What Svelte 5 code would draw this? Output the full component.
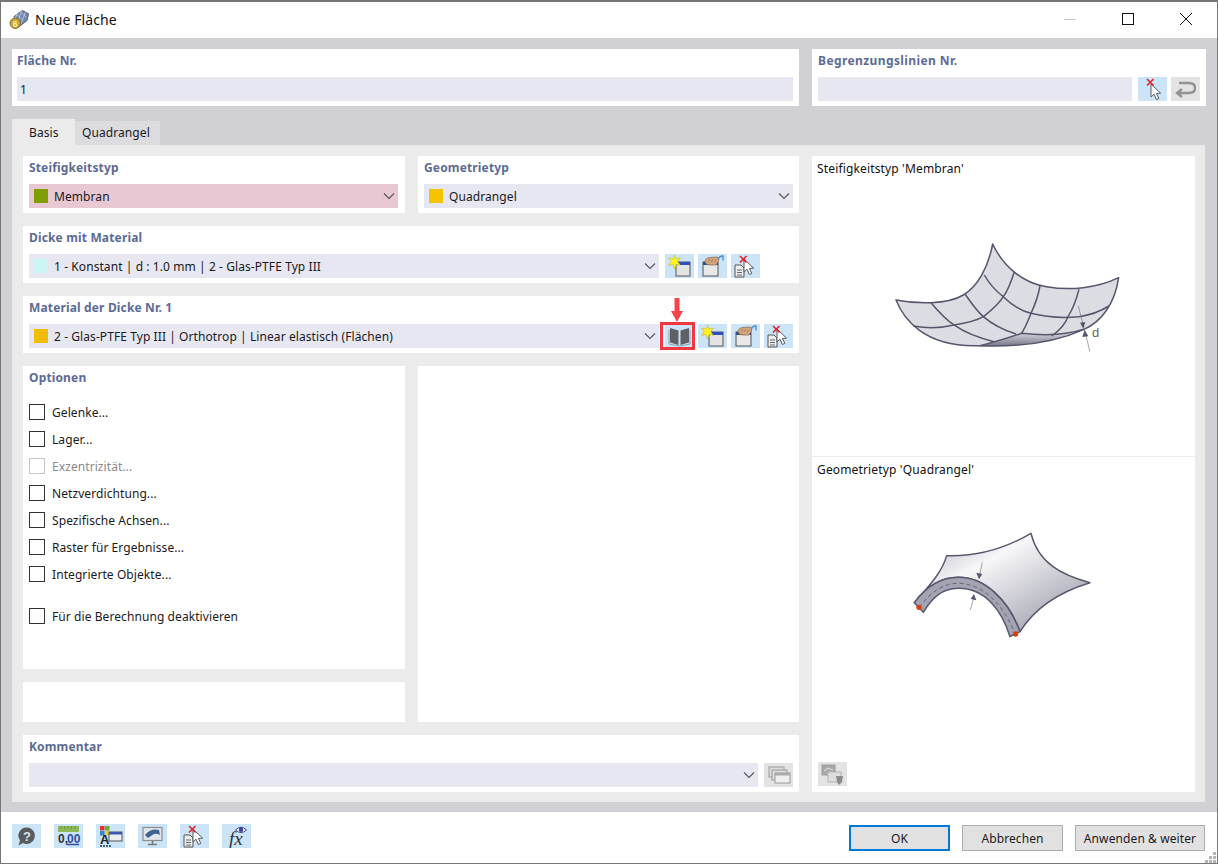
<script>
  const options = ['Gelenke...', 'Lager...', 'Exzentrizität...', 'Netzverdichtung...', 'Spezifische Achsen...', 'Raster für Ergebnisse...', 'Integrierte Objekte...'];
</script>

{#snippet chevron()}
  <svg class="chev" width="12" height="8" viewBox="0 0 12 8"><path d="M1 1.500 6 6.500 11 1.500" fill="none" stroke="#55555f" stroke-width="1.100"/></svg>
{/snippet}

{#snippet cursor(x, y)}
  <path transform="translate({x} {y})" d="M0 0 0 13 3 10.200 5.400 15.500 7.800 14.400 5.400 9.400 9.600 9.200Z" fill="#fff" stroke="#5a5a5a" stroke-width="1"/>
{/snippet}

{#snippet redx(x, y)}
  <path transform="translate({x} {y})" d="M0 0 6.500 6.500M6.500 0 0 6.500" stroke="#e8202a" stroke-width="1.600" fill="none"/>
{/snippet}

{#snippet pick()}
  <svg class="tile" viewBox="0 0 29 24">{@render cursor(13, 7)}{@render redx(9, 2)}</svg>
{/snippet}

{#snippet back()}
  <svg class="tile off" viewBox="0 0 29 24"><path d="M8 6H18Q24 6 24 11T18 16H7" fill="none" stroke="#929292" stroke-width="2.400"/><path d="M11 12 6 16 11 20" fill="none" stroke="#929292" stroke-width="2.400"/></svg>
{/snippet}

{#snippet fresh()}
  <svg class="tile" viewBox="0 0 29 24">
    <rect x="11" y="8" width="14" height="14" fill="#e3e3e3" stroke="#555"/>
    <rect x="11" y="8" width="14" height="3" fill="#2d4fc0"/>
    <path d="M9.500 1 11 5 15.500 4 12.700 7.600 15.500 11.500 11.300 10.400 9.500 15 7.700 10.400 3.500 11.500 6.300 7.600 3.500 4 8 5Z" fill="#fff21f" stroke="#b9ae30" stroke-width=".5"/>
  </svg>
{/snippet}

{#snippet hand()}
  <svg class="tile" viewBox="0 0 29 24">
    <rect x="5" y="8" width="15" height="14" fill="#e8e8e8" stroke="#555"/>
    <rect x="5" y="8" width="15" height="3" fill="#35507f"/>
    <path d="M7 8Q7 4 12 3.500L19 3Q22 4 20.500 7L18 11 12 11Q8 11 7 8Z" fill="#d6a57c" stroke="#80644a" stroke-width=".7"/>
    <path d="M10 7.500 12 5M13 8 15 5M16 8.500 18 5.500" stroke="#80644a" stroke-width=".6" fill="none"/>
    <path d="M20 5Q22 1.500 25 2L25 6.500" fill="none" stroke="#4d8fd0" stroke-width="1.400"/>
  </svg>
{/snippet}

{#snippet sheet()}
  <svg class="tile" viewBox="0 0 29 24">
    <path d="M4 11H10L13 14V23H4Z" fill="#eee" stroke="#555"/>
    <path d="M6 16H11M6 18.500H11M6 21H11" stroke="#555" stroke-width=".9"/>
    {@render cursor(13, 5)}{@render redx(9, 2)}
  </svg>
{/snippet}

{#snippet book()}
  <svg class="tile" viewBox="0 0 29 24">
    <path d="M5 4 13.500 6.500V21L5 18.500Z" fill="#5f6065"/>
    <path d="M24 4 15.500 6.500V21L24 18.500Z" fill="#5f6065"/>
    <path d="M4 6V20L14.500 22 25 20V6" fill="none" stroke="#8da0b3" stroke-width="1"/>
  </svg>
{/snippet}

{#snippet stack()}
  <svg class="tile off" viewBox="0 0 29 24">
    <rect x="5" y="4" width="15" height="10" fill="#ddd" stroke="#9a9a9a"/>
    <rect x="8" y="7" width="15" height="10" fill="#ddd" stroke="#9a9a9a"/>
    <rect x="11" y="10" width="15" height="10" fill="#f0f0f0" stroke="#9a9a9a"/>
    <rect x="11" y="10" width="15" height="2.500" fill="#ababab"/>
  </svg>
{/snippet}

{#snippet images()}
  <svg class="tile off" viewBox="0 0 29 24">
    <rect x="4" y="3" width="13" height="10" fill="#a8a8a8" stroke="#9c9c9c"/>
    <path d="M6 9 10 6 15 8" stroke="#e2e2e2" fill="none"/>
    <rect x="10" y="10" width="13" height="10" fill="#dedede" stroke="#b4b4b4"/>
    <path d="M18 14 25 14 24 20 21 23 19 20Z" fill="#8b8b8b"/>
  </svg>
{/snippet}

{#snippet help()}
  <svg class="tile" viewBox="0 0 29 24">
    <path d="M15 3.500A8.200 8.200 0 1 1 11 19L6.500 21.500 8 16.500A8.200 8.200 0 0 1 15 3.500Z" fill="#5b5b5f"/>
    <text x="15" y="16.500" class="helpq">?</text>
  </svg>
{/snippet}

{#snippet digits()}
  <svg class="tile" viewBox="0 0 29 24">
    <rect x="4" y="2" width="21" height="6" fill="#8eb85a"/>
    <path d="M7 2V5M10.500 2V5M14 2V5M17.500 2V5M21 2V5" stroke="#5d8a34" stroke-width=".7"/>
    <text x="4" y="18.500" class="num">0,</text><text x="13" y="18.500" class="num blue">00</text>
    <path d="M13 20.500H25" stroke="#2d4fa8" stroke-width="1.500"/>
  </svg>
{/snippet}

{#snippet colors()}
  <svg class="tile" viewBox="0 0 29 24">
    <rect x="4" y="2" width="4.500" height="4.500" fill="#d33"/><rect x="9" y="2" width="4.500" height="4.500" fill="#6a3"/>
    <rect x="4" y="7" width="4.500" height="4.500" fill="#38c"/><rect x="9" y="7" width="4.500" height="4.500" fill="#ec3"/>
    <text x="4" y="20" class="capa">A</text>
    <rect x="13" y="8" width="13" height="9" fill="#eee" stroke="#555"/><rect x="13" y="8" width="13" height="2.500" fill="#3a58ad"/>
    <path d="M4 22H15" stroke="#333" stroke-width="1.500" stroke-dasharray="2 1"/>
  </svg>
{/snippet}

{#snippet monitor()}
  <svg class="tile" viewBox="0 0 29 24">
    <rect x="5" y="3.500" width="19" height="13" fill="#dfe6ee" stroke="#8c8c8c" stroke-width="1.200"/>
    <path d="M7 11Q13 4 21 6L22 11Q17 8 13 12L10 14Z" fill="#3f6490"/>
    <path d="M14.500 16.500V20M10 20.500H19" stroke="#777" stroke-width="1.600"/>
  </svg>
{/snippet}

{#snippet fx()}
  <svg class="tile" viewBox="0 0 29 24">
    <text x="7" y="20.500" class="fx">fx</text>
    <path d="M13.500 6Q19 0.500 24.500 6 19 11 13.500 6Z" fill="#fff" stroke="#39408f" stroke-width="1"/>
    <circle cx="19" cy="5.700" r="2.200" fill="#39408f"/>
  </svg>
{/snippet}

<div class="window">
  <header class="titlebar">
    <svg class="appicon" viewBox="0 0 22 22">
      <path d="M5 8 14 1.500 20.500 5 19 12 10 19Z" fill="#6f86ad" stroke="#4b4b55" stroke-width=".8"/>
      <path d="M8 5.500 15 12M12 3 18.500 9M5.500 9 13 15.500M9 3 6 12M13 2 9 15M17 3.500 13 15" stroke="#c3cfe2" stroke-width=".8" fill="none"/>
      <circle cx="6.500" cy="15" r="5.500" fill="#c9a53a" stroke="#6e5a1f" stroke-width=".8"/>
      <text x="6.500" y="18.500" class="six">6</text>
    </svg>
    <span class="title">Neue Fläche</span>
    <div class="winctl">
      <span class="min"></span>
      <span class="max"></span>
      <svg class="close" width="12" height="12" viewBox="0 0 12 12"><path d="M0 0 12 12M12 0 0 12" stroke="#111" stroke-width="1"/></svg>
    </div>
  </header>

  <main class="body">
    <div class="toprow">
      <section class="panel">
        <h3>Fläche Nr.</h3>
        <div class="row"><div class="field plain">1</div></div>
      </section>
      <section class="panel lines">
        <h3>Begrenzungslinien Nr.</h3>
        <div class="row">
          <div class="field"></div>
          <div class="tools">{@render pick()}{@render back()}</div>
        </div>
      </section>
    </div>

    <nav class="tabs">
      <span class="tab active">Basis</span>
      <span class="tab">Quadrangel</span>
    </nav>

    <div class="tabbody">
      <div class="leftcol">
        <div class="pair">
          <section class="panel narrow">
            <h3>Steifigkeitstyp</h3>
            <div class="row"><div class="field select pink"><i class="swatch green"></i><span>Membran</span>{@render chevron()}</div></div>
          </section>
          <section class="panel">
            <h3>Geometrietyp</h3>
            <div class="row"><div class="field select"><i class="swatch yellow"></i><span>Quadrangel</span>{@render chevron()}</div></div>
          </section>
        </div>

        <section class="panel">
          <h3>Dicke mit Material</h3>
          <div class="row">
            <div class="field select fixed"><i class="swatch cyan"></i><span>1 - Konstant | d : 1.0 mm | 2 - Glas-PTFE Typ III</span>{@render chevron()}</div>
            <div class="tools">{@render fresh()}{@render hand()}{@render sheet()}</div>
          </div>
        </section>

        <section class="panel">
          <h3>Material der Dicke Nr. 1</h3>
          <div class="row">
            <div class="field select fixed"><i class="swatch amber"></i><span>2 - Glas-PTFE Typ III | Orthotrop | Linear elastisch (Flächen)</span>{@render chevron()}</div>
            <div class="tools">
              <div class="marked">
                {@render book()}
                <span class="frame"></span>
                <svg class="arrow" width="12" height="24" viewBox="0 0 12 24"><path d="M3.500 0H8.500V13H12L6 24 0 13H3.500Z" fill="#f9424a"/></svg>
              </div>
              {@render fresh()}{@render hand()}{@render sheet()}
            </div>
          </div>
        </section>

        <div class="pair grow">
          <div class="stack">
            <section class="panel options">
              <h3>Optionen</h3>
              <ul class="checks">
                {#each options as o}
                  <li class:disabled={o.startsWith('Exz')}><i class="box"></i><span>{o}</span></li>
                {/each}
                <li class="apart"><i class="box"></i><span>Für die Berechnung deaktivieren</span></li>
              </ul>
            </section>
            <section class="panel blank"></section>
          </div>
          <section class="panel"></section>
        </div>

        <section class="panel">
          <h3>Kommentar</h3>
          <div class="row">
            <div class="field select"><span></span>{@render chevron()}</div>
            <div class="tools">{@render stack()}</div>
          </div>
        </section>
      </div>

      <aside class="preview">
        <div class="pv first">
          <p>Steifigkeitstyp 'Membran'</p>
          <svg class="art" width="383" height="276" viewBox="812 180 383 276">
            <defs>
              <linearGradient id="fold" x1="0" y1="0" x2="0" y2="1"><stop offset="0" stop-color="#eeeef2"/><stop offset="1" stop-color="#77778c"/></linearGradient>
            </defs>
            <g transform="translate(880 230) scale(.3333)" fill="none" stroke="#55566c" stroke-width="4.500" stroke-linejoin="round">
              <path d="M48 210C110 222 200 225 250 195 295 168 325 110 338 42 370 110 430 160 500 170 570 182 650 175 716 143 705 220 665 275 612 298 520 340 400 352 290 347 130 350 70 265 48 210Z" fill="#dcdde3" stroke="none"/>
              <path d="M300 347C350 335 395 320 425 310 480 316 550 318 612 298 520 340 400 352 300 347Z" fill="url(#fold)" stroke="none"/>
              <path d="M153 218C180 250 200 270 222 285 260 312 300 325 342 335"/>
              <path d="M255 192C275 220 290 243 310 260 345 290 375 302 408 312"/>
              <path d="M313 135C330 165 350 185 370 200 395 225 420 242 453 250 500 262 550 265 597 260 630 255 660 245 687 228"/>
              <path d="M100 288C145 296 185 294 222 285 255 280 285 275 310 260 335 240 355 225 370 200 385 180 395 150 403 125"/>
              <path d="M425 310C440 285 445 270 453 250 465 225 475 195 480 168"/>
              <path d="M515 318C540 300 555 285 564 260 580 235 590 205 597 178"/>
              <path d="M300 347C350 335 395 320 425 310 480 316 550 318 612 298"/>
              <path d="M48 210C110 222 200 225 250 195 295 168 325 110 338 42 370 110 430 160 500 170 570 182 650 175 716 143 705 220 665 275 612 298 520 340 400 352 290 347 130 350 70 265 48 210Z"/>
              <path d="M595 228 630 365" stroke="#777" stroke-width="2"/>
              <path d="M600 278 616 276 610 296Z" fill="#55566c" stroke="none"/>
              <path d="M614 300 625 319 607 321Z" fill="#55566c" stroke="none"/>
            </g>
            <text x="1092" y="337" class="dlabel">d</text>
          </svg>
        </div>
        <div class="pv">
          <p>Geometrietyp 'Quadrangel'</p>
          <svg class="art" width="383" height="270" viewBox="812 481 383 270">
            <defs>
              <linearGradient id="sheen" x1="0" y1="0" x2="1" y2="1"><stop offset="0" stop-color="#a9a9b8"/><stop offset=".35" stop-color="#f7f7f9"/><stop offset="1" stop-color="#8f8f9f"/></linearGradient>
            </defs>
            <g transform="translate(905 530) scale(.3333)" fill="none" stroke="#58586e" stroke-width="4.500" stroke-linejoin="round">
              <path d="M28 218C70 170 110 130 125 77 220 80 310 50 378 10 400 100 470 135 555 158 450 190 385 240 345 305 310 210 240 142 160 142 100 142 60 175 28 218Z" fill="url(#sheen)"/>
              <path d="M28 218C60 175 100 142 160 142 240 142 310 210 345 305L315 320C290 240 240 175 160 175 110 175 80 205 55 247Z" fill="#a3a3b1"/>
              <path d="M42 232C75 190 110 160 160 160 230 160 295 220 330 312" stroke-width="2.500" stroke-dasharray="12 9"/>
              <path d="M232 97 224 135" stroke="#777" stroke-width="2"/>
              <path d="M214 128 232 132 222 148Z" fill="#58586e" stroke="none"/>
              <path d="M196 240 206 205" stroke="#777" stroke-width="2"/>
              <path d="M197 207 214 211 207 192Z" fill="#58586e" stroke="none"/>
              <circle cx="42" cy="232" r="8" fill="#d8400f" stroke="none"/>
              <circle cx="332" cy="312" r="8" fill="#d8400f" stroke="none"/>
            </g>
          </svg>
          <div class="pvtool">{@render images()}</div>
        </div>
      </aside>
    </div>
  </main>

  <footer class="footer">
    <div class="ftools">
      {@render help()}{@render digits()}{@render colors()}{@render monitor()}{@render sheet()}{@render fx()}
    </div>
    <div class="buttons">
      <button class="default">OK</button>
      <button>Abbrechen</button>
      <button class="wide">Anwenden &amp; weiter</button>
    </div>
    <svg class="grip" width="11" height="11" viewBox="0 0 11 11" fill="#b5b5b5">
      <rect x="8" y="0" width="3" height="3"/><rect x="4" y="4" width="3" height="3"/><rect x="8" y="4" width="3" height="3"/>
      <rect x="0" y="8" width="3" height="3"/><rect x="4" y="8" width="3" height="3"/><rect x="8" y="8" width="3" height="3"/>
    </svg>
  </footer>
</div>

<style>
  :global(body) { margin: 0; background: #fff; }
  * { box-sizing: border-box; }
  .window {
    width: 1218px; height: 864px; display: flex; flex-direction: column;
    border: 1px solid #777; border-top-width: 2px; background: #fff;
    font-family: "Noto Sans", "Open Sans", sans-serif; font-size: 12px; letter-spacing: .08px; color: #1a1a22;
  }
  .titlebar { height: 36px; display: flex; align-items: center; padding: 0 0 2px 8px; flex: none; }
  .appicon { width: 21px; height: 21px; margin-right: 5px; }
  .six { font: bold 9px "Liberation Sans", sans-serif; fill: #fff3a8; text-anchor: middle; }
  .title { font-size: 14px; letter-spacing: .1px; color: #111; }
  .winctl { margin-left: auto; display: flex; align-items: center; }
  .min { width: 12px; height: 1px; background: #c8c8c8; margin-right: 46px; }
  .max { width: 12px; height: 12px; border: 1px solid #111; margin-right: 46px; }
  .close { margin-right: 25px; }

  .body { flex: 1; background: #d0d0d5; padding: 11px 11px 10px; display: flex; flex-direction: column; min-height: 0; }
  .toprow { display: grid; grid-template-columns: 787px 394px; column-gap: 13px; height: 57px; flex: none; }
  .panel { background: #fff; padding: 0 6px; display: flex; flex-direction: column; min-width: 0; }
  .panel h3 { margin: 0; height: 28px; line-height: 23px; font-size: 12px; font-weight: 700; color: #5c6b96; letter-spacing: .15px; }
  .toprow .panel { padding: 0 6px 0 5px; }
  .toprow .panel.lines { padding-left: 6px; }
  .lines h3 { letter-spacing: .4px; }
  .panel.narrow { padding-right: 7px; }
  .row { display: flex; gap: 6px; height: 24px; }
  .field { flex: 1; min-width: 0; background: #e6e7f1; height: 24px; display: flex; align-items: center; padding-left: 3px; font-size: 12px; }
  .select { padding-left: 5px; padding-right: 3px; }
  .select span { margin-left: 6px; flex: 1; white-space: nowrap; }
  .fixed { flex: 0 0 630px; }
  .pink { background: #e8c8d2; }
  .swatch { width: 14px; height: 14px; flex: none; display: block; }
  .green { background: #7f9f00; }
  .yellow { background: #f5c400; }
  .cyan { background: #ccf6f6; }
  .amber { background: #f2bd00; }
  .chev { flex: none; }
  .tools { display: flex; gap: 4px; flex: none; }
  .tile { width: 29px; height: 24px; background: #cbe4f8; display: block; flex: none; }
  .tile.off { background: #e3e3e3; }
  .marked { position: relative; width: 29px; height: 24px; }
  .frame { position: absolute; left: -5px; top: -2px; width: 35px; height: 28px; border: 3px solid #f4363e; }
  .arrow { position: absolute; left: 6px; top: -26px; }

  .tabs { display: flex; align-items: flex-end; height: 26px; margin-top: 13px; flex: none; }
  .tab { height: 24px; line-height: 23px; padding: 0 7px; background: #dcdcdf; width: 85px; color: #1a1a22; white-space: nowrap; }
  .tab.active { height: 26px; line-height: 28px; width: 63px; background: #ebebeb; padding-left: 17px; }

  .tabbody { flex: 1; background: #ebebeb; padding: 11px 10px 10px 11px; display: grid; grid-template-columns: 776px 383px; column-gap: 13px; min-height: 0; width: 1193px; }
  .leftcol { display: flex; flex-direction: column; gap: 13px; min-height: 0; }
  .leftcol > .panel { height: 57px; flex: none; }
  .pair { display: grid; grid-template-columns: 382px 381px; column-gap: 13px; height: 57px; flex: none; }
  .pair.grow { height: 356px; }
  .stack { display: flex; flex-direction: column; gap: 13px; min-height: 0; }
  .options { flex: 1; }
  .blank { height: 40px; flex: none; }
  .checks { list-style: none; margin: 10px 0 0; padding: 0; display: flex; flex-direction: column; gap: 11px; }
  .checks li { height: 16px; display: flex; align-items: center; gap: 7px; line-height: 16px; white-space: nowrap; }
  .checks li span { padding-top: 2px; }
  .box { width: 16px; height: 16px; border: 1px solid #333; background: #fff; display: block; flex: none; }
  .disabled { color: #8b8b8b; }
  .disabled .box { border-color: #c6c6c6; }
  .apart { margin-top: 15px; }

  .preview { background: #fff; display: flex; flex-direction: column; min-height: 0; }
  .pv p { margin: 0; height: 24px; padding: 5px 0 0 5px; line-height: 16px; color: #111; letter-spacing: .15px; }
  .pv.first { height: 301px; border-bottom: 1px solid #ececec; }
  .art { display: block; }
  .pvtool { padding: 11px 0 0 6px; }
  .dlabel { font: 13px "Liberation Sans", sans-serif; fill: #666; }
  .helpq { font: bold 13px "Liberation Sans", sans-serif; fill: #d5e4f0; text-anchor: middle; }
  .num { font: bold 12px "Liberation Sans", sans-serif; fill: #333; }
  .num.blue { fill: #2d4fa8; }
  .capa { font: bold 13px "Liberation Sans", sans-serif; fill: #222; }
  .fx { font: italic 19px "Liberation Serif", serif; fill: #333; }

  .footer { height: 51px; position: relative; flex: none; display: flex; justify-content: space-between; align-items: flex-start; padding: 12px 12px 0 11px; }
  .ftools { display: flex; gap: 13px; }
  .buttons { display: flex; gap: 12px; margin-top: 1px; }
  button { width: 101px; height: 26px; background: #e1e1e1; border: 1px solid #adadad; font: 12px "Noto Sans", "Open Sans", sans-serif; letter-spacing: .1px; color: #1a1a22; padding: 0; }
  button.default { border: 2px solid #0078d7; }
  button.wide { width: 130px; }
  .grip { position: absolute; right: 1px; bottom: 0; }
</style>
